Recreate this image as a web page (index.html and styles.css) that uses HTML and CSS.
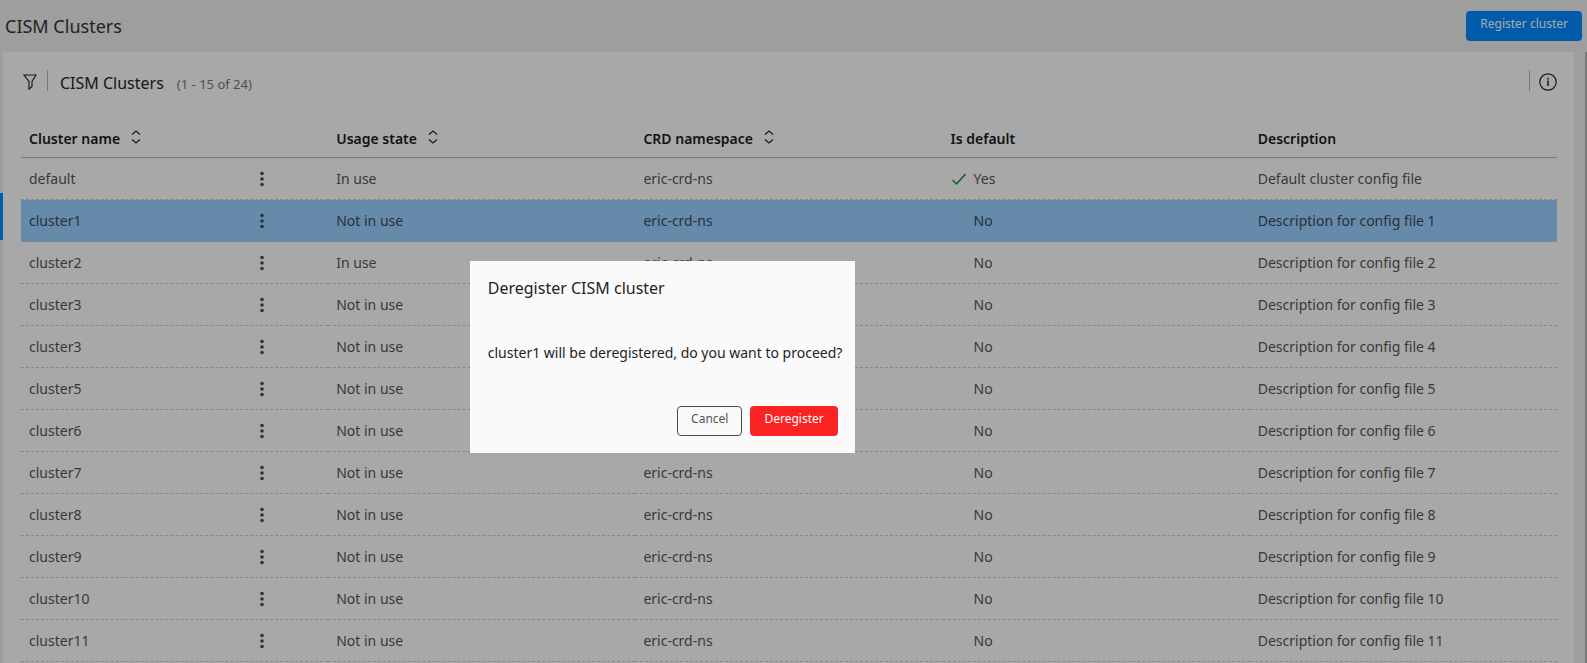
FILE: index.html
```html
<!DOCTYPE html>
<html lang="en">
<head>
<meta charset="utf-8">
<title>CISM Clusters</title>
<link rel="stylesheet" href="styles.css">
</head>
<body>
<svg class="sprite" aria-hidden="true">
  <symbol id="sort" viewBox="0 0 12 16"><path d="M2 5.5 6 2l4 3.5M2 10.5 6 14l4-3.5"/></symbol>
  <symbol id="dots" viewBox="0 0 4 16"><circle cx="2" cy="2.5" r="1.8"/><circle cx="2" cy="8" r="1.8"/><circle cx="2" cy="13.5" r="1.8"/></symbol>
</svg>
<div class="app">
  <header class="app-bar">
    <h1 class="app-title">CISM Clusters</h1>
    <button class="btn btn-primary" type="button">Register cluster</button>
  </header>
  <div class="body">
    <div class="rail"><span class="rail-mark"></span></div>
    <main class="panel">
      <div class="toolbar">
        <button class="icon-btn filter" type="button" aria-label="Filter">
          <svg class="icon-filter" viewBox="0 0 14 16"><path d="M1 1h12L9 7.5v5L6 15.2V7.5z"/></svg>
        </button>
        <span class="rule"></span>
        <h2 class="panel-title">CISM Clusters</h2>
        <span class="count">(1 - 15 of 24)</span>
        <span class="rule push"></span>
        <button class="icon-btn info" type="button" aria-label="Information">
          <svg class="icon-info" viewBox="0 0 18 18"><circle cx="9" cy="9" r="8.2"/><path class="glyph" d="M9 7.5v5.5M9 4.8v1.6"/></svg>
        </button>
      </div>
      <table class="grid">
        <thead>
          <tr>
            <th scope="col"><span class="head">Cluster name<button class="icon-btn" type="button" aria-label="Sort by cluster name"><svg class="icon-sort"><use href="#sort"/></svg></button></span></th>
            <th scope="col"><span class="head">Usage state<button class="icon-btn" type="button" aria-label="Sort by usage state"><svg class="icon-sort"><use href="#sort"/></svg></button></span></th>
            <th scope="col"><span class="head">CRD namespace<button class="icon-btn" type="button" aria-label="Sort by CRD namespace"><svg class="icon-sort"><use href="#sort"/></svg></button></span></th>
            <th scope="col">Is default</th>
            <th scope="col">Description</th>
          </tr>
        </thead>
        <tbody id="rows"></tbody>
      </table>
    </main>
  </div>
</div>
<div class="overlay">
  <section class="dialog" role="dialog" aria-modal="true" aria-labelledby="dialog-title">
    <h2 class="dialog-title" id="dialog-title">Deregister CISM cluster</h2>
    <p class="dialog-text">cluster1 will be deregistered, do you want to proceed?</p>
    <div class="dialog-actions">
      <button class="btn btn-outline" type="button">Cancel</button>
      <button class="btn btn-danger" type="button">Deregister</button>
    </div>
  </section>
</div>
<script src="app.js"></script>
</body>
</html>
```
FILE: styles.css
```css
* { box-sizing: border-box; }
body {
  margin: 0;
  font-family: "Noto Sans", sans-serif;
  font-size: 14px;
  line-height: 20px;
  color: #242424;
  background: #ebebeb;
}
h1, h2, p { margin: 0; font-weight: 400; }
button { font: inherit; color: inherit; }
.sprite { display: none; }
.app {
  height: 100vh;
  display: flex;
  flex-direction: column;
  overflow: hidden;
}
.app-bar {
  flex: none;
  height: 52px;
  padding: 0 5px;
  display: flex;
  align-items: center;
  justify-content: space-between;
}
.app-title { font-size: 18px; line-height: 24px; color: #333; }
.btn {
  height: 30px;
  padding: 0 13px 4px;
  border: 1px solid transparent;
  border-radius: 4px;
  font-size: 12px;
  line-height: 20px;
}
.btn-primary { background: #0088fd; color: #fafafa; }
.btn-outline { background: transparent; border-color: #4a4a4a; color: #555; }
.btn-danger { background: #fa2323; color: #fff; }
.body {
  flex: 1;
  min-height: 0;
  display: flex;
  border-right: 2px solid #b4b4b4;
}
.rail { width: 3px; padding-top: 141px; }
.rail-mark { display: block; height: 47px; background: #0088fd; }
.panel {
  flex: 1;
  margin-right: 11px;
  padding: 18px 17px 0 18px;
  background: #fafafa;
}
.toolbar { display: flex; align-items: center; height: 24px; }
.rule { width: 1px; height: 21px; margin-bottom: 3px; background: #b4b4b4; }
.icon-btn {
  display: flex;
  padding: 0;
  border: 0;
  background: none;
}
.icon-btn svg { fill: none; stroke: #242424; stroke-width: 1.2; }
.filter { margin: 0 10px 0 2px; }
.icon-filter { width: 14px; height: 16px; }
.icon-info { width: 18px; height: 18px; }
.icon-info .glyph { stroke: #555; stroke-width: 2; }
.info { margin-left: 9px; }
.icon-sort { width: 12px; height: 16px; }
.panel-title { margin-left: 12px; padding-top: 2px; font-size: 16px; line-height: 24px; }
.count { margin-left: 13px; padding-top: 4px; font-size: 13px; color: #767676; }
.push { margin-left: auto; }
.grid {
  width: 100%;
  margin-top: 24px;
  table-layout: fixed;
  border-collapse: separate;
  border-spacing: 0;
  text-align: left;
}
th {
  height: 40px;
  padding: 2px 8px 0;
  border-bottom: 1px solid #b4b4b4;
  font-weight: 600;
  color: #1c1c1c;
}
.head { display: flex; align-items: center; gap: 10px; }
.head .icon-btn { margin-bottom: 4px; }
td {
  height: 42px;
  padding: 0 8px;
  border-bottom: 1px dashed #c8c8c8;
  color: #555;
}
.selected td { background: #97cdfd; color: #3c4858; }
.name { display: flex; align-items: center; justify-content: space-between; padding-right: 56px; }
.name .icon-btn svg { width: 4px; height: 16px; fill: #4a4a4a; stroke: none; }
.flag { display: flex; align-items: center; gap: 7px; }
.flag svg { width: 16px; height: 14px; fill: none; stroke: #0a8a1e; stroke-width: 1.4; }
.overlay {
  position: fixed;
  inset: 0;
  display: flex;
  align-items: center;
  padding: 51px 0 0 29.6%;
  background: rgba(0, 0, 0, 0.325);
}
.dialog {
  display: flex;
  flex-direction: column;
  width: 385px;
  padding: 16px 17px 17px 18px;
  background: #fafafa;
}
.dialog-title { font-size: 16px; line-height: 22px; }
.dialog-text { margin: 44px 0 43px; white-space: nowrap; }
.dialog-actions { display: flex; justify-content: flex-end; gap: 8px; }
```
FILE: app.js
```js
const rows = [
  ["default", "In use", "Default cluster config file"],
  ["cluster1", "Not in use"],
  ["cluster2", "In use"],
  ["cluster3", "Not in use"],
  ["cluster3", "Not in use"],
  ["cluster5", "Not in use"],
  ["cluster6", "Not in use"],
  ["cluster7", "Not in use"],
  ["cluster8", "Not in use"],
  ["cluster9", "Not in use"],
  ["cluster10", "Not in use"],
  ["cluster11", "Not in use"]
];
const check = '<path d="M1.5 8 5.5 12 14.5 2"/>';
document.getElementById("rows").innerHTML = rows.map(([name, state, text], i) => `
  <tr class="${i === 1 ? "selected" : ""}">
    <td><div class="name">${name}<button class="icon-btn" type="button" aria-label="Actions for ${name}"><svg><use href="#dots"/></svg></button></div></td>
    <td>${state}</td>
    <td>eric-crd-ns</td>
    <td><span class="flag"><svg viewBox="0 0 16 14">${i ? "" : check}</svg>${i ? "No" : "Yes"}</span></td>
    <td>${text || "Description for config file " + i}</td>
  </tr>`).join("");
```
